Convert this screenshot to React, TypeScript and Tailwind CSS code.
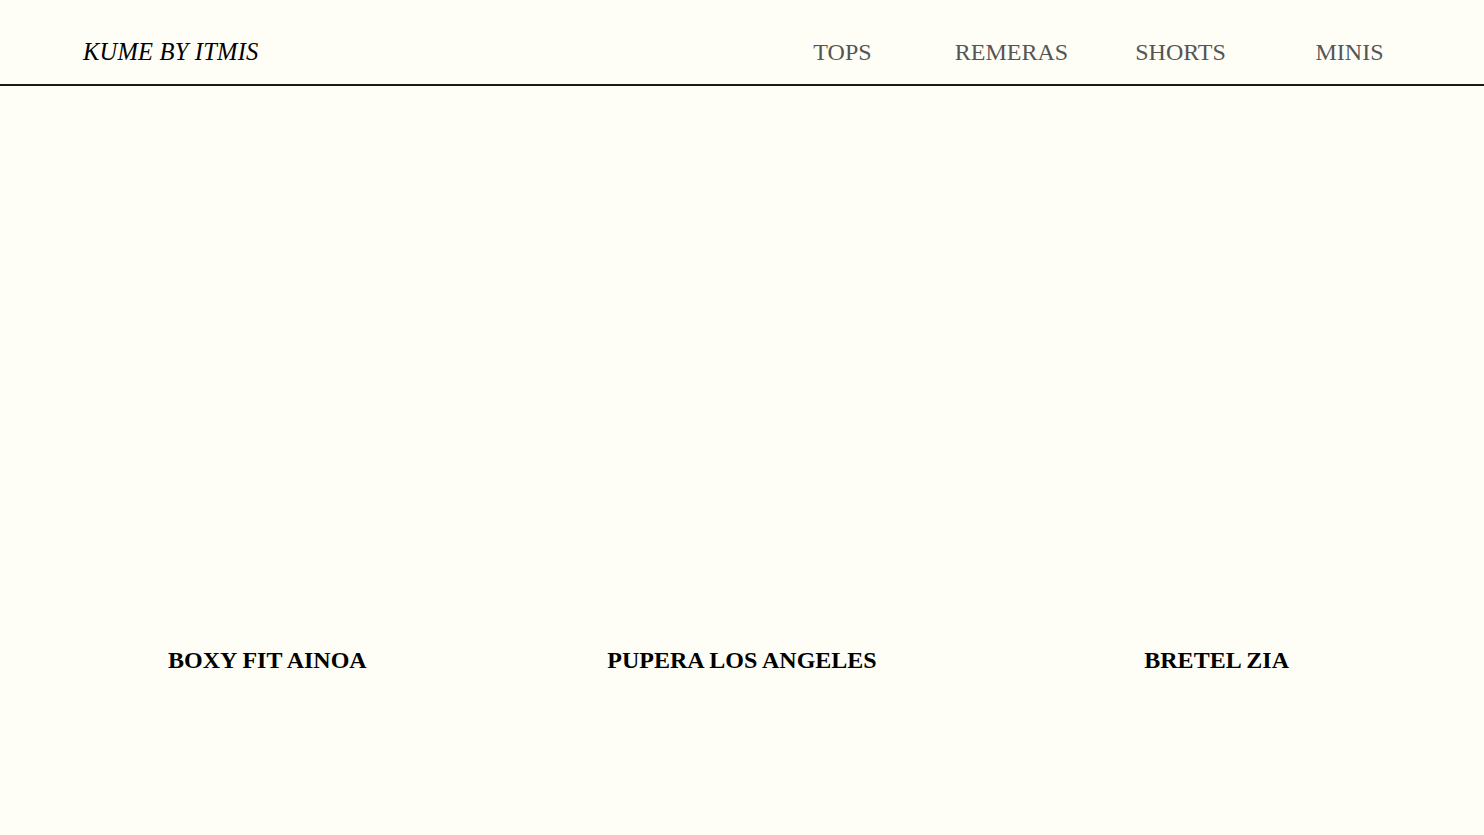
import React from 'react';

const navItems = ['TOPS', 'REMERAS', 'SHORTS', 'MINIS'];
const products = ['BOXY FIT AINOA', 'PUPERA LOS ANGELES', 'BRETEL ZIA'];

export default function App() {
  return (
    <div
      className="min-h-screen bg-[#fefef6] text-black"
      style={{ fontFamily: '"Liberation Serif", "DejaVu Serif", serif' }}
    >
      {/* Header */}
      <header className="h-[86px] flex items-start justify-between pt-[34px] pl-[83px] pr-[50px] border-b-2 border-[#1a1a1a]">
        <h1 className="italic text-[24.5px] leading-[36px] tracking-[0.2px]">KUME BY ITMIS</h1>
        <nav className="flex">
          {navItems.map((item) => (
            <a key={item} href="#" className="w-[169px] text-center text-[24px] leading-[36px] text-[#555555]">
              {item}
            </a>
          ))}
        </nav>
      </header>

      {/* Products */}
      <main className="grid grid-cols-3 px-[30px]">
        {products.map((name) => (
          <div key={name} className="flex flex-col items-center">
            <div className="w-full h-[559px]" />
            <h2 className="font-bold text-[24px] leading-[30px]">{name}</h2>
          </div>
        ))}
      </main>
    </div>
  );
}
